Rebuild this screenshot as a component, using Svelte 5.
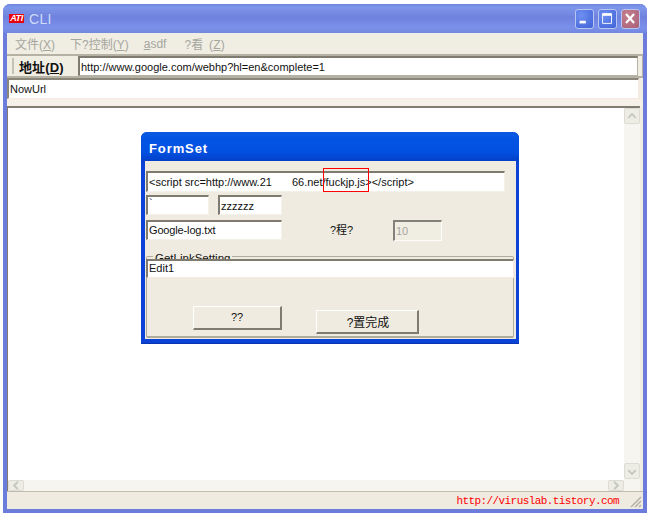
<script>
  const menus = [
    { text: '文件(', key: 'X', end: ')' },
    { text: '下?控制(', key: 'Y', end: ')' },
    { text: '', key: 'a', end: 'sdf' },
    { text: '?看 (', key: 'Z', end: ')' }
  ];
</script>

<div class="win">
  <header class="title">
    <span class="logo">ATI</span>
    <span class="title-text">CLI</span>
    <div class="controls">
      <button class="ctl" aria-label="Minimize"><svg width="19" height="19" viewBox="0 0 19 19"><rect x="4" y="12" width="7" height="3" fill="#fff"/></svg></button>
      <button class="ctl" aria-label="Maximize"><svg width="19" height="19" viewBox="0 0 19 19"><path d="M4 4h10v11H4z" fill="none" stroke="#fff"/><rect x="4" y="4" width="10" height="2.5" fill="#fff"/></svg></button>
      <button class="ctl close" aria-label="Close"><svg width="19" height="19" viewBox="0 0 19 19"><path d="M4.500 4.500l9 10M13.500 4.500l-9 10" stroke="#fff" stroke-width="2.4"/></svg></button>
    </div>
  </header>

  <nav class="menu">
    {#each menus as m}
      <span class="menu-item">{m.text}<u>{m.key}</u>{m.end}</span>
    {/each}
  </nav>

  <div class="addr">
    <span class="grip"></span>
    <b class="addr-label">地址(<u>D</u>)</b>
    <div class="field addr-field">http://www.google.com/webhp?hl=en&amp;complete=1</div>
  </div>

  <div class="field now">NowUrl</div>
  <div class="band"></div>

  <main class="client">
    <div class="content">
      <section class="dialog">
        <h2 class="dlg-title">FormSet</h2>
        <div class="dlg-body">
          <div class="field f-script">
            <span>&lt;script src=http://www.21</span><span class="gap"></span><span>66.net/fuckjp.js&gt;&lt;/script&gt;</span>
          </div>
          <div class="row r2">
            <div class="field f-a">`</div>
            <div class="field f-b">zzzzzz</div>
          </div>
          <div class="row r3">
            <div class="field f-c">Google-log.txt</div>
            <span class="lbl">?程?</span>
            <div class="field f-d">10</div>
          </div>
          <div class="group">
            <span class="legend">GetLinkSetting</span>
            <div class="field f-edit">Edit1</div>
            <div class="btns">
              <button class="btn b1">??</button>
              <button class="btn b2">?置完成</button>
            </div>
          </div>
        </div>
        <span class="redbox"></span>
      </section>
    </div>
    <div class="vbar">
      <span class="sb-btn"><svg width="15" height="15" viewBox="0 0 15 15"><path d="M3.500 9l4-4 4 4" fill="none" stroke="#c4c8c0" stroke-width="2"/></svg></span>
      <span class="sb-btn"><svg width="15" height="15" viewBox="0 0 15 15"><path d="M3.500 6l4 4 4-4" fill="none" stroke="#c4c8c0" stroke-width="2"/></svg></span>
    </div>
    <div class="hbar">
      <span class="sb-btn"><svg width="15" height="15" viewBox="0 0 15 15"><path d="M9.500 3.500l-4 4 4 4" fill="none" stroke="#c4c8c0" stroke-width="2"/></svg></span>
      <span class="sb-btn"><svg width="15" height="15" viewBox="0 0 15 15"><path d="M5.500 3.500l4 4-4 4" fill="none" stroke="#c4c8c0" stroke-width="2"/></svg></span>
    </div>
  </main>

  <footer class="status">
    <span class="link">http://viruslab.tistory.com</span>
    <svg class="rgrip" width="12" height="12" viewBox="0 0 12 12"><path d="M11 1L1 11M11 5l-6 6M11 9l-2 2" stroke="#b5b2a6" stroke-width="1.500" fill="none"/></svg>
  </footer>
</div>

<style>
  :global(body) { margin: 0; background: #fff; }
  * { box-sizing: border-box; }
  .win {
    width: 644px; height: 509px; margin: 4px 0 0 3px;
    border: solid #6b7cdb; border-width: 0 4px 4px;
    border-radius: 7px 7px 0 0;
    background: #f0ede3;
    display: flex; flex-direction: column;
    font: 11px "Liberation Sans", "Noto Sans CJK SC", sans-serif;
    color: #111;
  }
  .title {
    height: 29px; margin: 0 -4px; padding: 0 7px 0 6px;
    display: flex; align-items: center; gap: 5px;
    background: linear-gradient(180deg, #6f86e2 0, #7e96ea 12%, #6f82dd 45%, #7a90ea 80%, #7288e0 100%);
    border-radius: 7px 7px 0 0;
  }
  .logo {
    width: 15px; height: 9px; background: #e8000d; color: #fff;
    font: italic bold 9px/9px "Liberation Sans", sans-serif; text-align: center;
    letter-spacing: -.4px; overflow: hidden;
  }
  .title-text { color: #cfdcfa; font: 14px "Liberation Sans", sans-serif; letter-spacing: .3px; }
  .controls { margin-left: auto; display: flex; gap: 4px; }
  .ctl {
    width: 19px; height: 20px; padding: 0; display: flex; align-items: center; justify-content: center;
    background: radial-gradient(circle at 30% 30%, #6f8ff0, #3f63d8);
    border: 1px solid #b9c6f2; border-radius: 3px;
  }
  .close { background: radial-gradient(circle at 30% 30%, #c4808e, #a85f78); }
  .menu { height: 21px; display: flex; align-items: center; padding-left: 8px; color: #a6a69e; gap: 15px; }
  .menu-item { font-size: 12px; }
  .menu-item:last-child { margin-left: 3px; word-spacing: 2px; letter-spacing: .2px; }
  .addr {
    height: 24px; display: flex; align-items: center; padding: 0 4px 0 5px;
    border-top: 2px solid #b5b2a4; border-bottom: 2px solid #b5b2a4;
    border-right: 1px solid #b5b2a4;
  }
  .grip { width: 2px; height: 16px; border: solid #c4c2b6; border-width: 0 1px 0 1px; background: #fff; }
  .addr-label { margin: 0 13px 0 5px; font-size: 13px; font-weight: 700; width: 46px; white-space: nowrap; letter-spacing: .1px; }
  .field {
    background: #fff;
    border-style: solid; border-width: 2px 1px 1px 2px;
    border-color: #7f7b6f #f3f1ea #f3f1ea #7f7b6f;
    white-space: nowrap; overflow: hidden;
    padding: 0 0 0 1px;
    display: flex; align-items: center;
  }
  .addr-field { flex: 1; height: 20px; border-right-color: #b5b2a4; border-bottom-color: #b5b2a4; }
  .now { height: 21px; margin-right: 4px; border-color: #8a867a #f7e9e2 #f7e9e2 #8a867a; }
  .band { height: 7px; background: #f6f1e8; }
  .client {
    flex: 1; min-height: 0; display: grid;
    grid-template-columns: 1fr 16px; grid-template-rows: 1fr 11px;
    border-top: 2px solid #807c70; border-left: 1px solid #807c70;
    margin-right: 3px; background: #fff;
  }
  .content { position: relative; min-width: 0; }
  .dialog {
    position: absolute; left: 133px; top: 24px; width: 378px; height: 212px;
    background: #0b43d6; border-radius: 6px 6px 0 0;
    display: flex; flex-direction: column;
    border-bottom: 1px solid #0a35b0;
  }
  .dlg-title {
    margin: 0; height: 29px; padding: 3px 0 0 8px; display: flex; align-items: center;
    color: #fff; font: 700 13px "Liberation Sans", sans-serif; letter-spacing: .9px;
    background: linear-gradient(180deg, #0a5be0, #0454e4 25%, #0350e0 70%, #0340c8);
    border-radius: 6px 6px 0 0;
  }
  .dlg-body {
    height: 178px; margin: 0 3px 0 4px; padding: 10px 0 0 1px;
    background: #efebe0;
    display: flex; flex-direction: column;
  }
  .f-script { width: 359px; height: 21px; }
  .gap { width: 20px; flex: none; }
  .row { display: flex; position: relative; }
  .r2 { margin-top: 3px; gap: 9px; }
  .f-a, .f-b { height: 20px; }
  .f-a { width: 63px; align-items: flex-start; }
  .f-b { width: 64px; }
  .r3 { margin-top: 5px; align-items: center; height: 20px; }
  .f-c { width: 136px; height: 20px; letter-spacing: -.15px; padding-bottom: 2px; }
  .lbl { margin-left: 48px; margin-bottom: 2px; width: 63px; font-size: 11px; }
  .f-d { width: 49px; height: 21px; background: #f0ede3; color: #a6a59e; border-color: #84807a #fdfcf8 #fdfcf8 #84807a; }
  .group {
    position: relative; margin-top: 16px; width: 368px; height: 82px;
    border: 1px solid #b0ac9e; border-width: 1px 1px 2px 1px; border-radius: 2px;
  }
  .legend {
    position: absolute; left: 6px; top: -5px; padding: 0 2px; background: #efebe0;
    line-height: 13px; height: 7px; overflow: hidden; font-size: 11.500px;
  }
  .f-edit { position: relative; margin: 2px 0 0 -1px; width: 368px; height: 19px; padding-bottom: 2px; border-color: #7f7b6f #f7e9e2 #f7e9e2 #7f7b6f; }
  .btns { position: relative; display: flex; align-items: flex-start; padding: 28px 0 0 46px; gap: 34px; }
  .btn {
    background: #efebe0; font: 11px "Liberation Sans", "Noto Sans CJK SC", sans-serif; color: #111;
    border-style: solid; border-width: 1px 2px 2px 1px;
    border-color: #fff #7f7b6f #7f7b6f #fff; padding: 0;
  }
  .b1 { width: 89px; height: 24px; padding-bottom: 2px; }
  .b2 { width: 103px; height: 24px; margin-top: 4px; font-size: 12px; padding-left: 2px; }
  .redbox { position: absolute; left: 182px; top: 36px; width: 46px; height: 24px; border: 1px solid #f00; }
  .vbar {
    grid-row: 1 / 3; grid-column: 2; background: #f6f5ef;
    display: flex; flex-direction: column; justify-content: space-between; padding-bottom: 12px;
  }
  .hbar {
    grid-row: 2; grid-column: 1; background: #f6f5ef;
    display: flex; justify-content: space-between;
  }
  .sb-btn {
    width: 16px; height: 16px; display: flex; align-items: center; justify-content: center;
    background: #eeede5; border: 1px solid #dedcd2; border-radius: 2px;
  }
  .hbar .sb-btn { height: 11px; width: 16px; overflow: hidden; }
  .status { height: 18px; position: relative; flex: none; display: flex; align-items: center; justify-content: flex-end; border-top: 1px solid #c0bdb0; padding-right: 24px; background: #efebe0; }
  .link { color: #f00; font: 11px "Liberation Mono", monospace; letter-spacing: -.58px; }
  .rgrip { position: absolute; right: 1px; bottom: 1px; }
</style>
